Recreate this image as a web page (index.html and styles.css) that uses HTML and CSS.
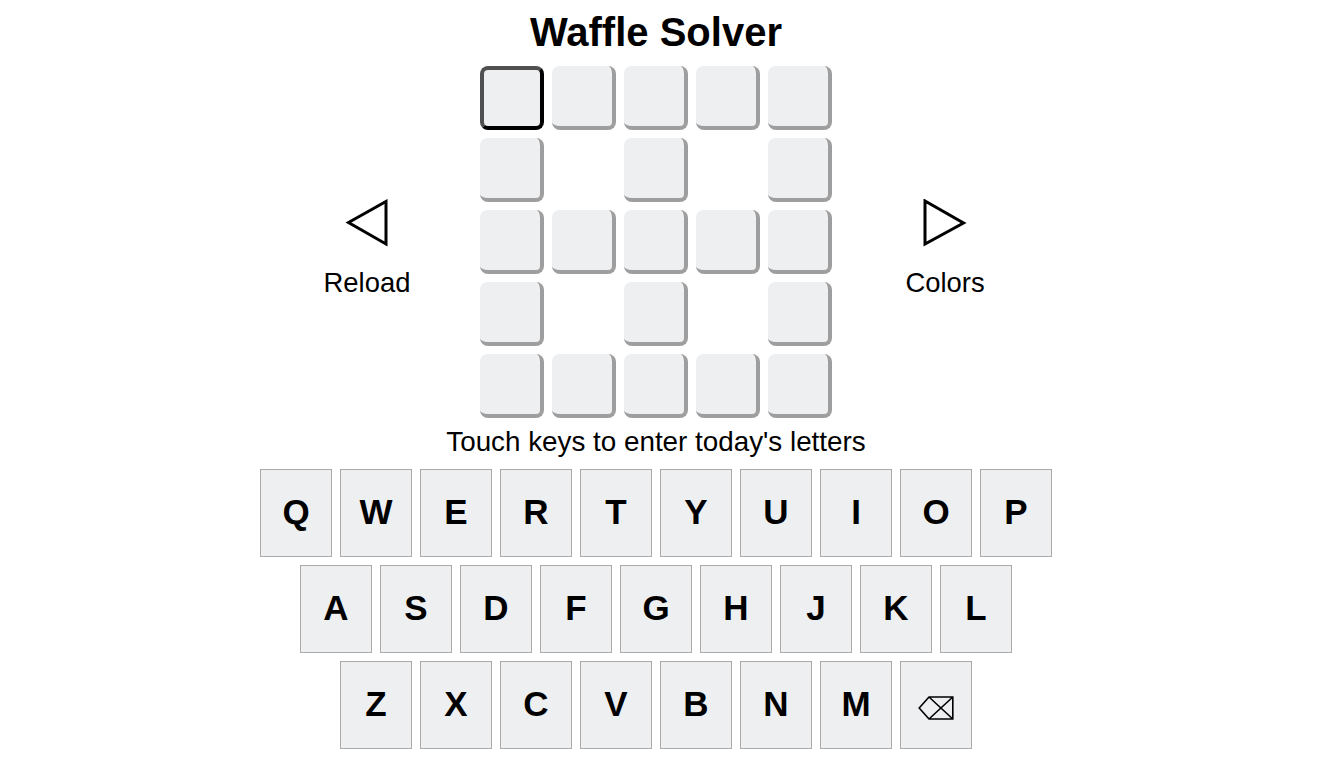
FILE: index.html
```html
<!DOCTYPE html>
<html lang="en">
<head>
<meta charset="utf-8">
<title>Waffle Solver</title>
<link rel="stylesheet" href="styles.css">
</head>
<body>
<div class="app">
  <h1 class="title">Waffle Solver</h1>
  <div class="board-row">
    <div class="side">
      <svg class="tri" width="48" height="48" viewBox="0 0 48 48"><polygon points="5.5,23.5 43,2.5 43,45" fill="none" stroke="#000" stroke-width="3" stroke-linejoin="miter"/></svg>
      <div class="side-label">Reload</div>
    </div>
    <div class="grid">
      <div class="tile selected"></div><div class="tile"></div><div class="tile"></div><div class="tile"></div><div class="tile"></div>
      <div class="tile"></div><div class="hole"></div><div class="tile"></div><div class="hole"></div><div class="tile"></div>
      <div class="tile"></div><div class="tile"></div><div class="tile"></div><div class="tile"></div><div class="tile"></div>
      <div class="tile"></div><div class="hole"></div><div class="tile"></div><div class="hole"></div><div class="tile"></div>
      <div class="tile"></div><div class="tile"></div><div class="tile"></div><div class="tile"></div><div class="tile"></div>
    </div>
    <div class="side">
      <svg class="tri" width="48" height="48" viewBox="0 0 48 48"><polygon points="4,2 4,45 42.5,24" fill="none" stroke="#000" stroke-width="3" stroke-linejoin="miter"/></svg>
      <div class="side-label">Colors</div>
    </div>
  </div>
  <div class="hint">Touch keys to enter today's letters</div>
  <div class="keyboard">
    <div class="krow">
      <div class="key">Q</div><div class="key">W</div><div class="key">E</div><div class="key">R</div><div class="key">T</div><div class="key">Y</div><div class="key">U</div><div class="key">I</div><div class="key">O</div><div class="key">P</div>
    </div>
    <div class="krow">
      <div class="key">A</div><div class="key">S</div><div class="key">D</div><div class="key">F</div><div class="key">G</div><div class="key">H</div><div class="key">J</div><div class="key">K</div><div class="key">L</div>
    </div>
    <div class="krow">
      <div class="key">Z</div><div class="key">X</div><div class="key">C</div><div class="key">V</div><div class="key">B</div><div class="key">N</div><div class="key">M</div>
      <div class="key back"><svg width="36" height="24" viewBox="0 0 36 24"><path d="M1.2 12 L11 1 H34.8 V23 H11 Z M11 1 L34.8 23 M11 23 L34.8 1" fill="none" stroke="#000" stroke-width="1.6" stroke-linejoin="miter"/></svg></div>
    </div>
  </div>
</div>
</body>
</html>
```
FILE: styles.css
```css
html, body {
  margin: 0;
  padding: 0;
  background: #fff;
}

body {
  font-family: "Liberation Sans", Arial, sans-serif;
  color: #000;
}

.app {
  width: 1312px;
  padding-top: 9px;
  display: flex;
  flex-direction: column;
  align-items: center;
}

.title {
  margin: 0;
  font-size: 40px;
  line-height: 46px;
  font-weight: bold;
}

.board-row {
  margin-top: 11px;
  display: flex;
  align-items: flex-start;
  gap: 48px;
}

.side {
  width: 130px;
  padding-top: 133px;
  display: flex;
  flex-direction: column;
  align-items: center;
}

.tri {
  display: block;
}

.side-label {
  margin-top: 20px;
  font-size: 27.4px;
  line-height: 31px;
}

.grid {
  display: grid;
  grid-template-columns: repeat(5, 64px);
  grid-auto-rows: 64px;
  gap: 8px;
}

.tile {
  box-sizing: border-box;
  background: #eeeff1;
  border-radius: 8px;
  border-right: 4px solid #9e9e9e;
  border-bottom: 4px solid #9e9e9e;
}

.tile.selected {
  border: 4px solid #000;
  border-top-color: #505050;
  border-left-color: #505050;
}

.hint {
  margin-top: 8px;
  font-size: 27.8px;
  line-height: 32px;
}

.keyboard {
  margin-top: 11px;
  display: flex;
  flex-direction: column;
  align-items: center;
  gap: 8px;
}

.krow {
  display: flex;
  gap: 8px;
}

.key {
  box-sizing: border-box;
  width: 72px;
  height: 88px;
  border: 1px solid #aaa;
  background: #eeeff1;
  display: flex;
  align-items: center;
  justify-content: center;
  font-size: 35px;
  font-weight: bold;
  padding-bottom: 2px;
}

.key.back svg {
  display: block;
  margin-top: 7px;
}
```
